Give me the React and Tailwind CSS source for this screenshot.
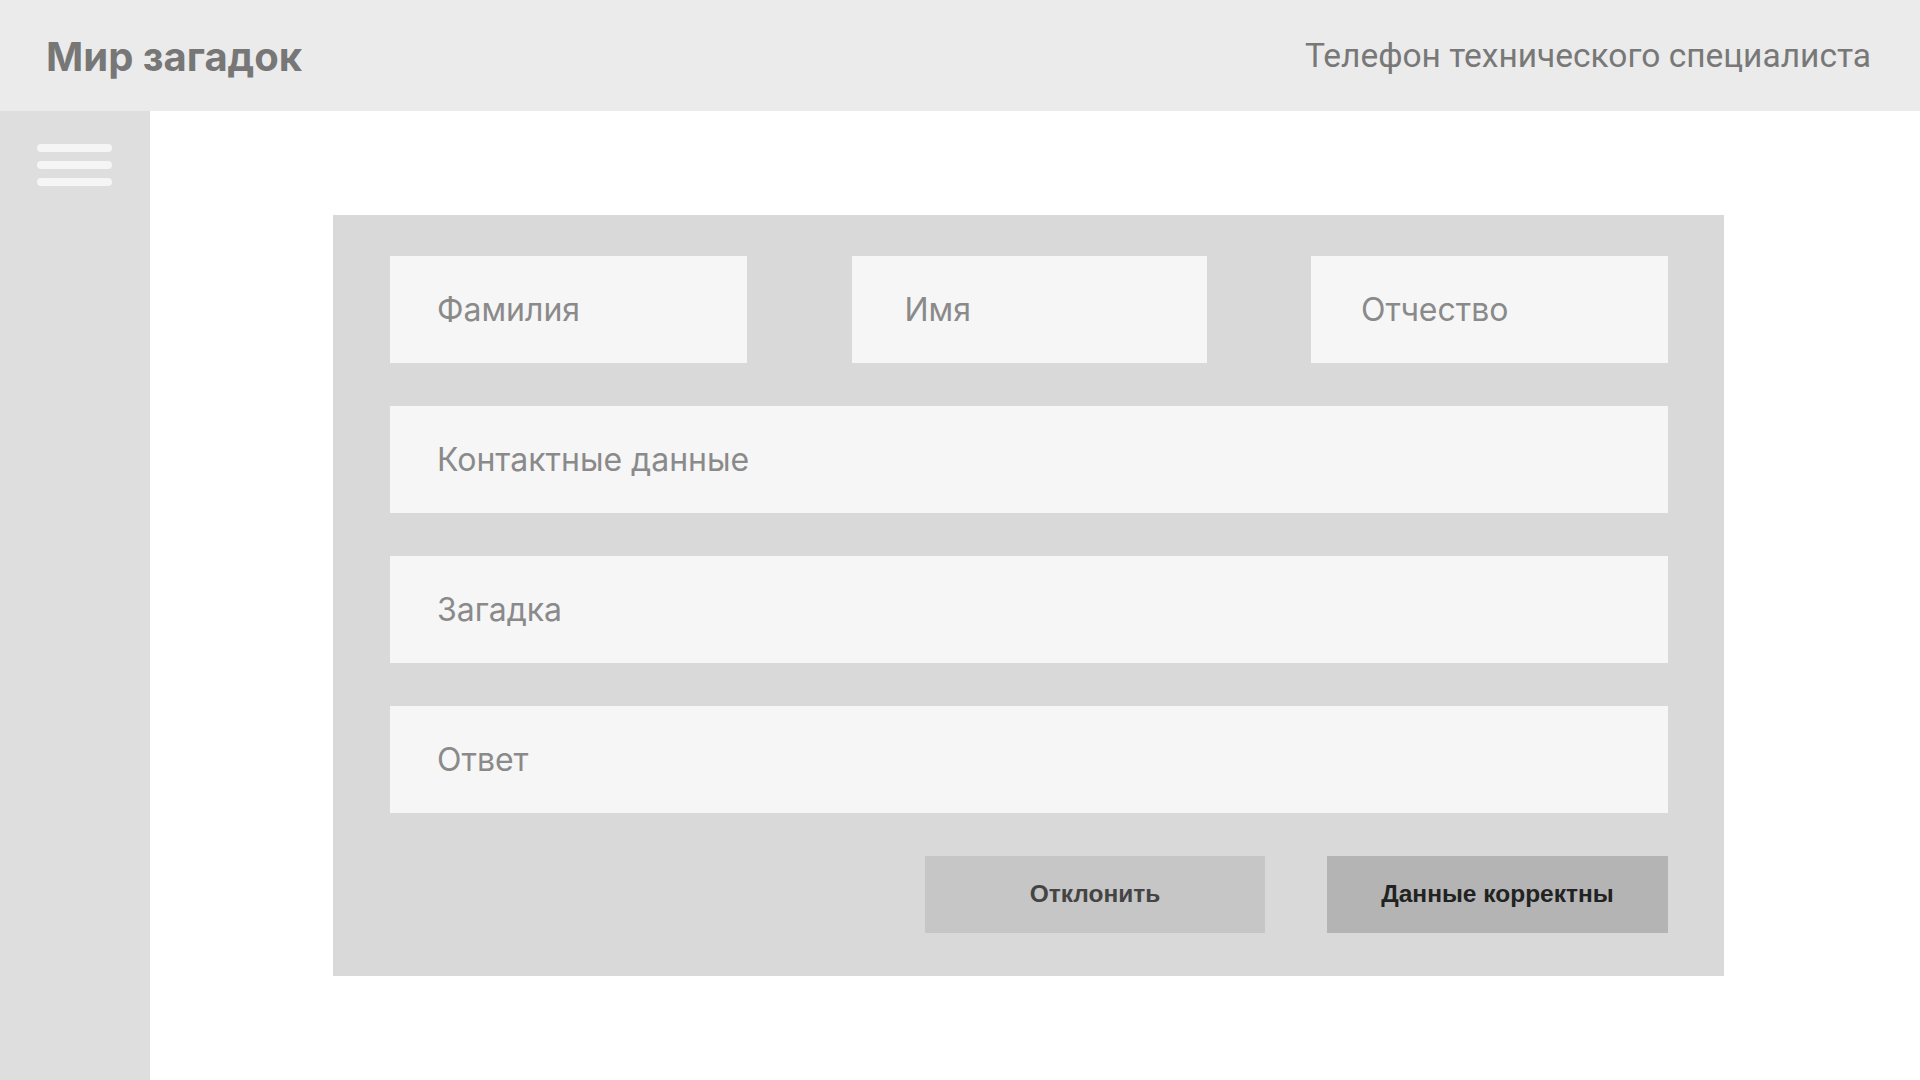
import { useState } from 'react';

function Field({ placeholder, className = '', pad = 'pl-[47px]' }) {
  const [value, setValue] = useState('');
  return (
    <input
      value={value}
      onChange={e => setValue(e.target.value)}
      placeholder={placeholder}
      className={`h-[107px] bg-[#f6f6f6] ${pad} pr-6 text-[32px] text-[#555] placeholder:text-[#8a8a8a] outline-none font-['Inter',sans-serif] ${className}`}
    />
  );
}

export default function App() {
  return (
    <div className="h-[1080px] flex flex-col bg-white overflow-hidden">
      {/* Header */}
      <header className="h-[111px] shrink-0 bg-[#ebebeb] flex items-center justify-between pl-[46px] pr-[49px] pt-[2px]">
        <h1 className="text-[40px] font-bold text-[#777] font-['Inter',sans-serif]">Мир загадок</h1>
        <p className="text-[33.5px] text-[#787878] font-['Roboto',sans-serif]">Телефон технического специалиста</p>
      </header>

      <div className="flex flex-1 min-h-0">
        {/* Sidebar */}
        <aside className="w-[150px] shrink-0 bg-[#dedede] pt-[33px] pl-[37px]">
          <button className="flex flex-col gap-[9px]">
            <span className="block w-[75px] h-[8px] rounded-full bg-[#f5f5f5]" />
            <span className="block w-[75px] h-[8px] rounded-full bg-[#f5f5f5]" />
            <span className="block w-[75px] h-[8px] rounded-full bg-[#f5f5f5]" />
          </button>
        </aside>

        {/* Main */}
        <main className="flex-1 pl-[183px] pt-[104px]">
          <form
            onSubmit={e => e.preventDefault()}
            className="w-[1391px] bg-[#d9d9d9] pt-[41px] pb-[43px] pl-[57px] pr-[56px] flex flex-col gap-[43px]"
          >
            <div className="flex justify-between">
              <Field placeholder="Фамилия" className="w-[357px]" />
              <Field placeholder="Имя" className="w-[355px]" pad="pl-[53px]" />
              <Field placeholder="Отчество" className="w-[357px]" pad="pl-[50px]" />
            </div>
            <Field placeholder="Контактные данные" />
            <Field placeholder="Загадка" />
            <Field placeholder="Ответ" />
            <div className="flex justify-end gap-[62px]">
              <button type="button" className="w-[340px] h-[77px] bg-[#c6c6c6] text-[24.5px] font-bold text-[#444] font-['Liberation_Sans',Arial,sans-serif]">
                Отклонить
              </button>
              <button type="submit" className="w-[341px] h-[77px] bg-[#b4b4b4] text-[24.5px] font-bold text-[#222] font-['Liberation_Sans',Arial,sans-serif]">
                Данные корректны
              </button>
            </div>
          </form>
        </main>
      </div>
    </div>
  );
}
